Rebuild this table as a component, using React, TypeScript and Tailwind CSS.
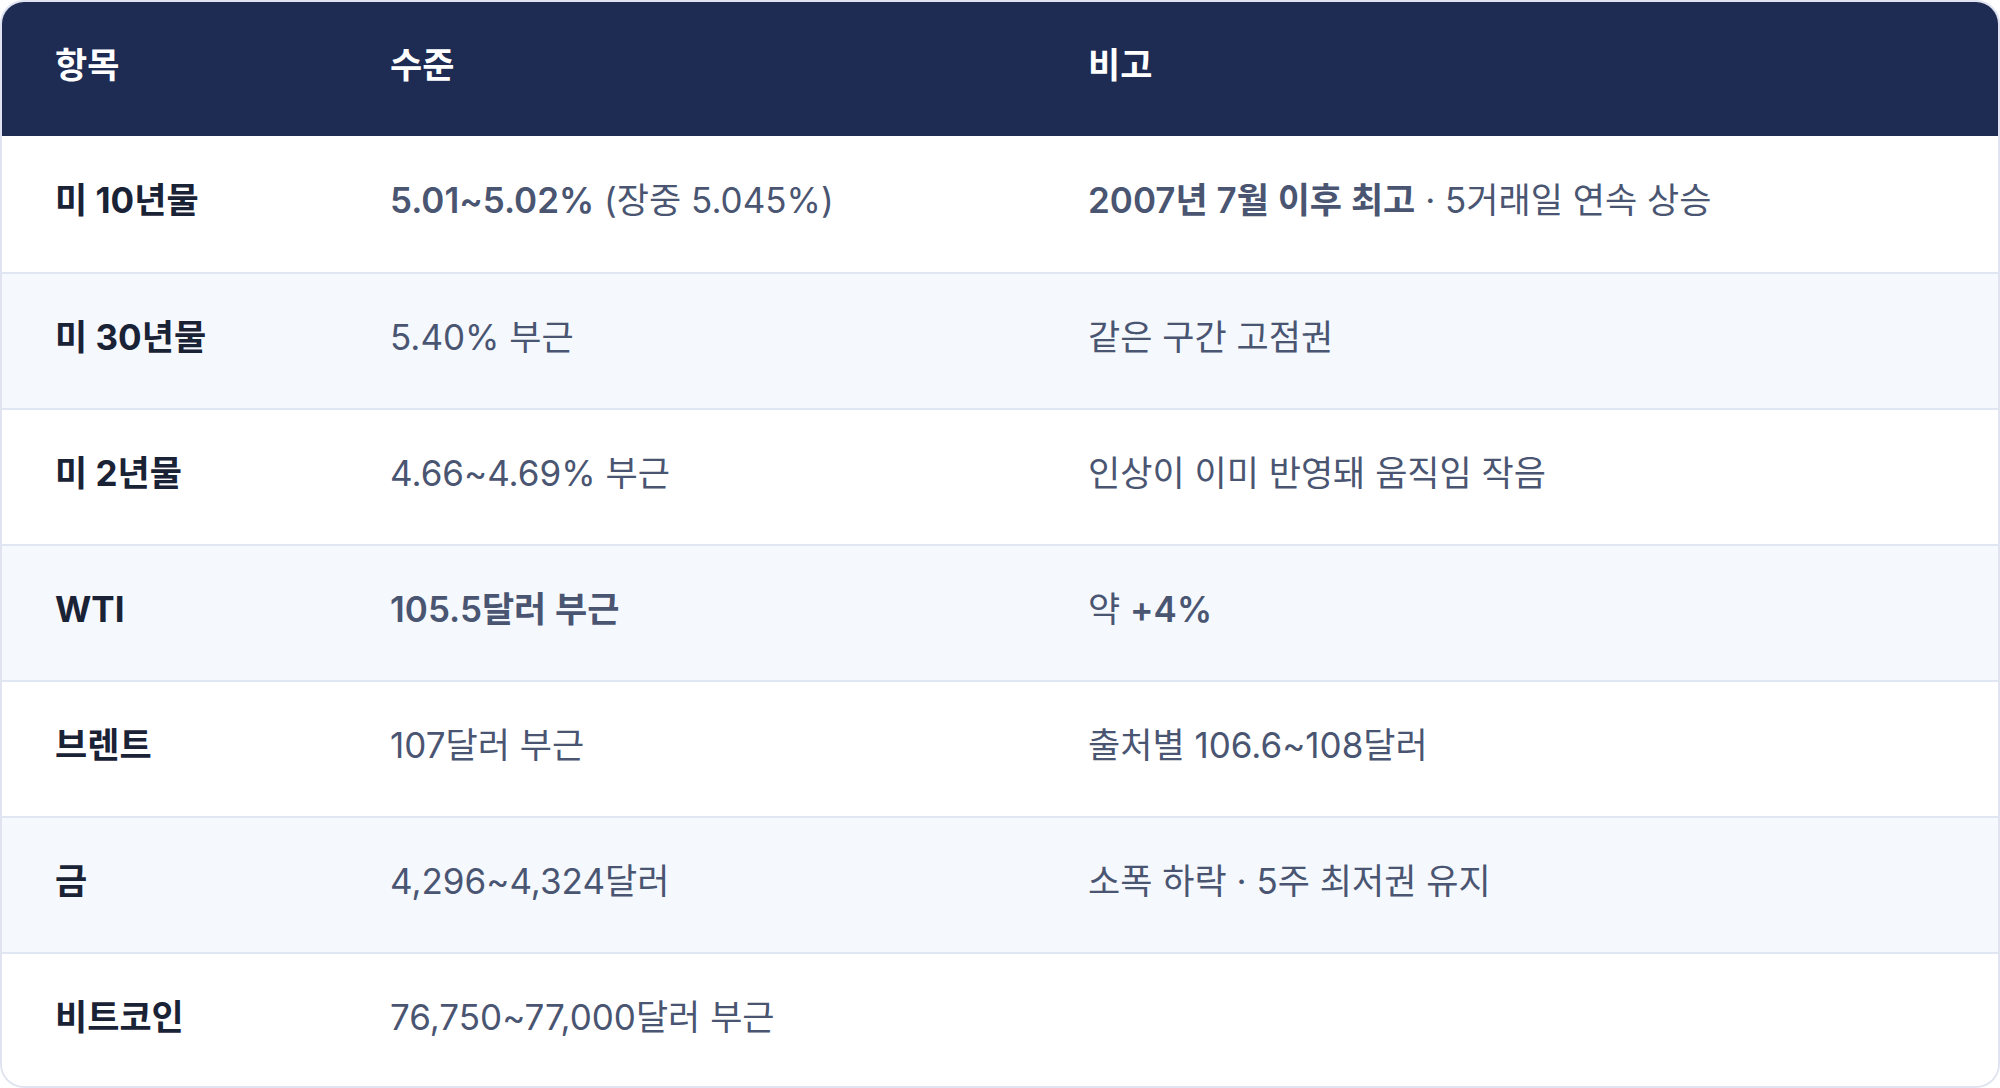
import React from "react";

type Row = {
  item: string;
  level: React.ReactNode;
  note: React.ReactNode;
};

const rows: Row[] = [
  {
    item: "미 10년물",
    level: (
      <>
        <span className="font-semibold">5.01~5.02%</span> (장중 5.045%)
      </>
    ),
    note: (
      <>
        <span className="font-semibold">2007년 7월 이후 최고</span> · 5거래일 연속 상승
      </>
    ),
  },
  { item: "미 30년물", level: "5.40% 부근", note: "같은 구간 고점권" },
  { item: "미 2년물", level: "4.66~4.69% 부근", note: "인상이 이미 반영돼 움직임 작음" },
  {
    item: "WTI",
    level: <span className="font-semibold">105.5달러 부근</span>,
    note: (
      <>
        약 <span className="font-semibold">+4%</span>
      </>
    ),
  },
  { item: "브렌트", level: "107달러 부근", note: "출처별 106.6~108달러" },
  { item: "금", level: "4,296~4,324달러", note: "소폭 하락 · 5주 최저권 유지" },
  { item: "비트코인", level: "76,750~77,000달러 부근", note: "" },
];

export default function App() {
  return (
    <div
      className="w-[2000px] h-[1088px] bg-white"
      style={{ fontFamily: 'Inter, "Noto Sans CJK KR", sans-serif' }}
    >
      <div className="h-full overflow-hidden rounded-[24px] border-2 border-[#dfe4f0] bg-white">
        {/* header */}
        <div className="grid h-[134px] grid-cols-[334px_698px_1fr] items-center bg-[#1e2b53] pb-2 text-[35px] font-bold text-white">
          <div className="pl-[53px]">항목</div>
          <div className="pl-[54px]">수준</div>
          <div className="pl-[54px]">비고</div>
        </div>

        {rows.map((r, i) => (
          <div
            key={r.item}
            className={`grid h-[136px] grid-cols-[334px_698px_1fr] items-center pb-2 text-[35px] ${
              i > 0 ? "border-t-2 border-[#e0e6f2]" : ""
            } ${i % 2 === 1 ? "bg-[#f5f8fd]" : "bg-white"}`}
          >
            <div className="pl-[53px] font-bold text-[#1a2236]">{r.item}</div>
            <div className="pl-[54px] text-[#4a5572]">{r.level}</div>
            <div className="pl-[54px] text-[#4a5572]">{r.note}</div>
          </div>
        ))}
      </div>
    </div>
  );
}
